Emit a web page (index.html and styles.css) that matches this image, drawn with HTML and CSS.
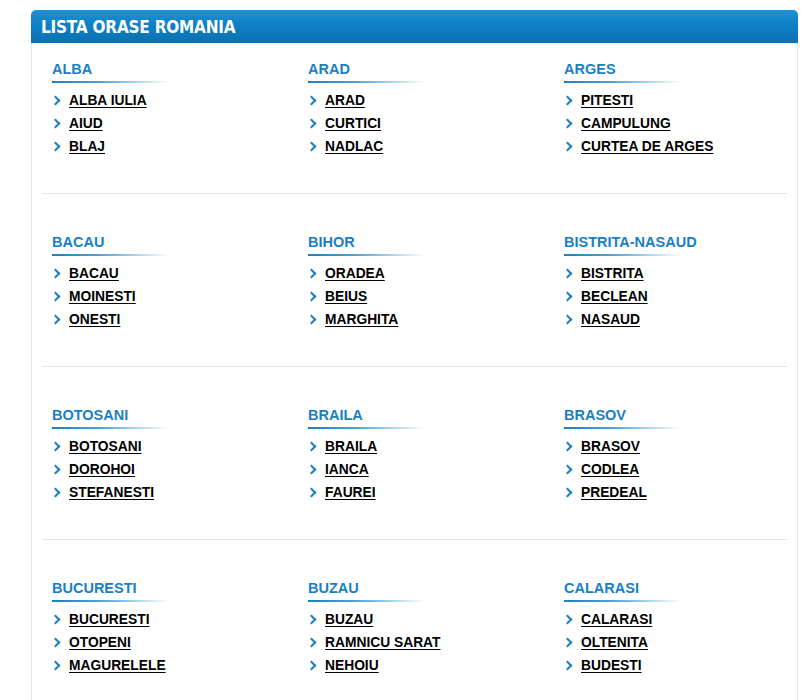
FILE: index.html
```html
<!DOCTYPE html>
<html lang="ro">
<head>
<meta charset="utf-8">
<title>Lista orase Romania</title>
<link rel="stylesheet" href="styles.css">
</head>
<body>
<div class="panel">
  <div class="panel-head">LISTA ORASE ROMANIA</div>
  <div class="panel-body">
    <div class="row">
      <div class="county"><h3>ALBA</h3><ul><li><a href="#">ALBA IULIA</a></li><li><a href="#">AIUD</a></li><li><a href="#">BLAJ</a></li></ul></div>
      <div class="county"><h3>ARAD</h3><ul><li><a href="#">ARAD</a></li><li><a href="#">CURTICI</a></li><li><a href="#">NADLAC</a></li></ul></div>
      <div class="county"><h3>ARGES</h3><ul><li><a href="#">PITESTI</a></li><li><a href="#">CAMPULUNG</a></li><li><a href="#">CURTEA DE ARGES</a></li></ul></div>
    </div>
    <div class="row">
      <div class="county"><h3>BACAU</h3><ul><li><a href="#">BACAU</a></li><li><a href="#">MOINESTI</a></li><li><a href="#">ONESTI</a></li></ul></div>
      <div class="county"><h3>BIHOR</h3><ul><li><a href="#">ORADEA</a></li><li><a href="#">BEIUS</a></li><li><a href="#">MARGHITA</a></li></ul></div>
      <div class="county"><h3>BISTRITA-NASAUD</h3><ul><li><a href="#">BISTRITA</a></li><li><a href="#">BECLEAN</a></li><li><a href="#">NASAUD</a></li></ul></div>
    </div>
    <div class="row">
      <div class="county"><h3>BOTOSANI</h3><ul><li><a href="#">BOTOSANI</a></li><li><a href="#">DOROHOI</a></li><li><a href="#">STEFANESTI</a></li></ul></div>
      <div class="county"><h3>BRAILA</h3><ul><li><a href="#">BRAILA</a></li><li><a href="#">IANCA</a></li><li><a href="#">FAUREI</a></li></ul></div>
      <div class="county"><h3>BRASOV</h3><ul><li><a href="#">BRASOV</a></li><li><a href="#">CODLEA</a></li><li><a href="#">PREDEAL</a></li></ul></div>
    </div>
    <div class="row">
      <div class="county"><h3>BUCURESTI</h3><ul><li><a href="#">BUCURESTI</a></li><li><a href="#">OTOPENI</a></li><li><a href="#">MAGURELELE</a></li></ul></div>
      <div class="county"><h3>BUZAU</h3><ul><li><a href="#">BUZAU</a></li><li><a href="#">RAMNICU SARAT</a></li><li><a href="#">NEHOIU</a></li></ul></div>
      <div class="county"><h3>CALARASI</h3><ul><li><a href="#">CALARASI</a></li><li><a href="#">OLTENITA</a></li><li><a href="#">BUDESTI</a></li></ul></div>
    </div>
  </div>
</div>
</body>
</html>
```

FILE: styles.css
```css
html, body {
  margin: 0;
  padding: 0;
  background: #ffffff;
  font-family: "Liberation Sans", Arial, sans-serif;
}

.panel {
  margin: 10px 0 0 31px;
  width: 767px;
  box-sizing: border-box;
}

.panel-head {
  height: 33px;
  box-sizing: border-box;
  padding: 0 10px;
  display: flex;
  align-items: center;
  border-radius: 5px 5px 0 0;
  background: linear-gradient(to bottom, #1d92d4 0%, #0f80c4 45%, #0a70b4 100%);
  color: #ffffff;
  font-family: "DejaVu Sans Condensed", "DejaVu Sans", sans-serif;
  font-stretch: condensed;
  font-weight: bold;
  font-size: 17px;
  letter-spacing: -0.2px;
}

.panel-body {
  border-left: 1px solid #e8e8e8;
  border-right: 1px solid #e8e8e8;
  padding: 0 10px 30px 10px;
}

.row {
  display: grid;
  grid-template-columns: repeat(3, 256px);
  padding: 17px 0 35px 10px;
  border-bottom: 1px solid #e3e3e3;
  margin-bottom: 22px;
}

.county h3 {
  margin: 0;
  font-size: 14.5px;
  line-height: 18px;
  font-weight: bold;
  color: #1a80c3;
  padding-bottom: 3px;
}

.county h3::after {
  content: "";
  display: block;
  width: 118px;
  height: 2px;
  margin-top: 3px;
  background: linear-gradient(to right, #1a80c3 0%, #4ea3d6 40%, rgba(255,255,255,0) 100%);
}

.county ul {
  list-style: none;
  margin: 3px 0 0 0;
  padding: 0;
}

.county li {
  display: flex;
  align-items: center;
  line-height: 23px;
  height: 23px;
}

.county li::before {
  content: "";
  width: 5px;
  height: 5px;
  border-top: 2px solid #1a80c3;
  border-right: 2px solid #1a80c3;
  transform: rotate(45deg);
  margin: 0 10px 0 0;
  flex: none;
}

.county a {
  color: #000000;
  font-weight: bold;
  font-size: 13.8px;
  text-decoration: underline;
  text-underline-offset: 2px;
}
```
